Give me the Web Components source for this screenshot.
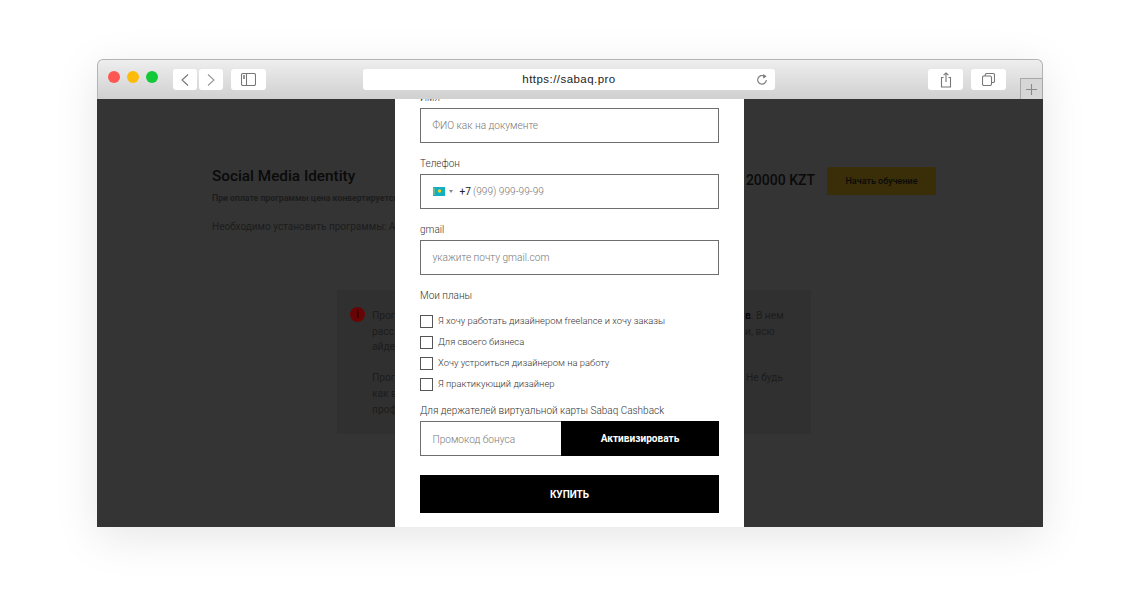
<!DOCTYPE html>
<html lang="ru">
<head>
<meta charset="utf-8">
<title>Sabaq</title>
<style>
    html, body { margin: 0; background: #fff; }
    body { font-family: Roboto, "Liberation Sans", sans-serif; height: 595px; overflow: hidden; }
    safari-window { margin: 59px 0 0 97px; }
</style>
</head>
<body>

<safari-window url="https://sabaq.pro">
    <course-page></course-page>
    <buy-modal slot="overlay">
        <form-field label="Имя" placeholder="ФИО как на документе"></form-field>
        <form-field label="Телефон" phone placeholder="(999) 999-99-99"></form-field>
        <form-field label="gmail" placeholder="укажите почту gmail.com"></form-field>
        <plan-list label="Мои планы">
            <plan-check>Я хочу работать дизайнером freelance и хочу заказы</plan-check>
            <plan-check>Для своего бизнеса</plan-check>
            <plan-check>Хочу устроиться дизайнером на работу</plan-check>
            <plan-check>Я практикующий дизайнер</plan-check>
        </plan-list>
        <promo-field label="Для держателей виртуальной карты Sabaq Cashback"></promo-field>
    </buy-modal>
</safari-window>

<script>
// browser chrome round the page
class SafariWindow extends HTMLElement {
    constructor() {
        super();
        this.attachShadow({mode: 'open'}).innerHTML = `
        <style>
            :host { display: block; width: 946px; height: 468px; box-shadow: 0 10px 45px rgba(0,0,0,.1); border-radius: 6px 6px 0 0; }
            .bar {
                box-sizing: border-box; height: 40px; position: relative;
                display: flex; align-items: flex-start; padding: 9px 0 0 9.500px;
                background: linear-gradient(#eeeeee, #d0d0d0);
                border: 1px solid #b4b4b4; border-bottom: 0; border-radius: 6px 6px 0 0;
            }
            .lights { display: flex; gap: 7px; margin: 2px 15.500px 0 0; }
            .lights i { width: 12px; height: 12px; border-radius: 50%; }
            .btn {
                height: 21px; background: #fff; border-radius: 3px; display: flex;
                align-items: center; justify-content: center; flex: none;
            }
            svg { fill: none; stroke: #777; stroke-width: 1.1; display: block; }
            .url {
                width: 412px; margin: 0 153px 0 97px; font: 11.500px/23px "Liberation Sans", sans-serif;
                letter-spacing: .45px; color: #222; position: relative;
            }
            .url svg { position: absolute; right: 7px; top: 4px; }
            .plus {
                position: absolute; right: -1px; bottom: 0; width: 21px; height: 20px;
                border: 1px solid #a8a8a8; border-bottom: 0; background: #d6d6d6;
                display: flex; align-items: center; justify-content: center;
            }
            .stage { position: relative; height: 428px; overflow: hidden; background: #343434; }
        </style>
        <div class="bar">
            <div class="lights">
                <i style="background:#fc5753"></i><i style="background:#fdbc0c"></i><i style="background:#12c93a"></i>
            </div>
            <div class="btn" style="width:24px"><svg width="10" height="14" viewBox="0 0 10 14"><path d="M8 1.500 2 7l6 5.500"/></svg></div>
            <div class="btn" style="width:24px;margin:0 8px 0 2px"><svg width="10" height="14" viewBox="0 0 10 14"><path stroke="#999" d="M2 1.500 8 7l-6 5.500"/></svg></div>
            <div class="btn" style="width:35px"><svg width="15" height="13" viewBox="0 0 15 13"><rect x=".5" y=".5" width="14" height="12" rx="1.500"/><path d="M5.500.5v12"/><path stroke-width="1.400" d="M2 3h2M2 5h2"/></svg></div>
            <div class="btn url"><span id="url"></span><svg width="12" height="13" viewBox="0 0 12 13"><path d="M8.600 3.400A4.300 4.300 0 1 0 10.300 7"/><path fill="#777" stroke="none" d="M7.200 1 10.600 3.400 7.200 5.400z"/></svg></div>
            <div class="btn" style="width:35px"><svg width="12" height="16" viewBox="0 0 12 16"><path d="M3.600 5.500H1.500v9.500h9V5.500H8.400M6 10V1M3.600 3.200 6 .9l2.400 2.300"/></svg></div>
            <div class="btn" style="width:35px;margin-left:8px"><svg width="13" height="13" viewBox="0 0 13 13"><rect x=".5" y="3" width="9" height="9.500" rx="1.500"/><path d="M3.200 3V2A1.500 1.500 0 0 1 4.700.5h6.300A1.500 1.500 0 0 1 12.500 2v6A1.500 1.500 0 0 1 11 9.500H9.500"/></svg></div>
            <div class="plus"><svg width="11" height="11" viewBox="0 0 11 11"><path stroke="#8a8a8a" d="M5.500 0v11M0 5.500h11"/></svg></div>
        </div>
        <div class="stage"><slot></slot><slot name="overlay"></slot></div>`;
    }

    connectedCallback() {
        this.shadowRoot.getElementById('url').textContent = this.getAttribute('url');
    }
}

// the dimmed page that sits behind the modal
class CoursePage extends HTMLElement {
    constructor() {
        super();
        this.attachShadow({mode: 'open'}).innerHTML = `
        <style>
            :host { display: block; padding: 68px 107px 0 115px; color: #0a0a0a; white-space: nowrap; }
            .head { display: flex; align-items: flex-start; height: 28px; }
            h1 { font: 500 15.300px/18px Roboto, sans-serif; margin: 0; }
            .price { margin-left: auto; font: 500 14px/26px Roboto, sans-serif; }
            .start {
                width: 109px; height: 28px; margin-left: 12px; background: #392e08; border-radius: 1px;
                font: 500 9px/28px Roboto, sans-serif; text-align: center;
            }
            .note { font: 700 8.700px/12px Roboto, sans-serif; color: #1d1d1d; margin-top: -3px; }
            .need { font: 400 10px/14px Roboto, sans-serif; color: #1c1c1c; margin-top: 16px; }
            .info {
                box-sizing: border-box; width: 474px; height: 144px; margin: 56px 0 0 125px;
                background: #303030; padding: 17px 0 0 13px; display: flex; gap: 7px;
                font: 400 10.200px/15.600px Roboto, sans-serif; color: #1c1c1c;
            }
            .dot {
                width: 15px; height: 15px; border-radius: 50%; background: #690404; flex: none;
                color: #2b0000; font: 700 10px/15px Roboto, sans-serif; text-align: center;
            }
            .lines { display: grid; grid-template-columns: 373px auto; align-content: start; grid-auto-rows: 15.600px; margin-top: 1px; }
            .gap { grid-column: 1 / 3; height: 15.600px; }
            .shift { margin-left: 1px; }
            b { color: #050505; }
        </style>
        <div class="head"><h1>Social Media Identity</h1><div class="price">20000 KZT</div><div class="start">Начать обучение</div></div>
        <div class="note">При оплате программы цена конвертируется</div>
        <div class="need">Необходимо установить программы: Adobe</div>
        <div class="info">
            <div class="dot">i</div>
            <div class="lines">
                <span>Прог</span><span><b>в</b>. В нем</span>
                <span>расс</span><span>и, всю</span>
                <span>айде</span><span></span>
                <div class="gap"></div>
                <span>Прог</span><span class="shift">Не будь</span>
                <span>как в</span><span></span>
                <span>проф</span><span></span>
            </div>
        </div>`;
    }
}

class BuyModal extends HTMLElement {
    constructor() {
        super();
        this.attachShadow({mode: 'open'}).innerHTML = `
        <style>
            :host { position: absolute; left: 298px; top: 0; bottom: 0; width: 349px; background: #fff; overflow: hidden; }
            .body { box-sizing: border-box; padding: 0 25px 0 25px; margin-top: -10px; display: flex; flex-direction: column; gap: 12px; }
            button {
                display: block; height: 38px; border: 0; padding: 2px 0 0; background: #000; color: #fff; margin-top: 7px;
                font: 700 10px/36px Roboto, sans-serif;
            }
        </style>
        <div class="body"><slot></slot><button>КУПИТЬ</button></div>`;
    }
}

class FormField extends HTMLElement {
    constructor() {
        super();
        this.attachShadow({mode: 'open'}).innerHTML = `
        <style>
            :host { display: block; }
            label { display: block; height: 16px; font: 300 10px/18px Roboto, sans-serif; color: #333; margin-bottom: 3px; }
            .box {
                box-sizing: border-box; height: 35px; border: 1px solid #6e6e6e; padding: 1px 11.500px 0;
                display: flex; align-items: center; font: 300 10.150px/14px Roboto, sans-serif; color: #777;
            }
            :host([phone]) .box { padding-top: 0; }
            .pre { display: none; align-items: center; }
            :host([phone]) .pre { display: flex; }
            .caret { width: 0; height: 0; margin: 0 7px 0 4px; border: 2px solid transparent; border-top: 3px solid #888; border-bottom: 0; }
            .code { color: #222; font-weight: 400; margin-right: 2px; }
            svg { display: block; }
        </style>
        <label></label>
        <div class="box">
            <div class="pre">
                <svg width="12" height="9" viewBox="0 0 12 9"><rect width="12" height="9" fill="#12aec4"/><circle cx="6.500" cy="4" r="1.700" fill="#f2d21f"/><path d="M1 1v7" stroke="#d8d24a" stroke-width=".8"/></svg>
                <i class="caret"></i><span class="code">+7</span>
            </div>
            <span class="ph"></span>
        </div>`;
    }

    connectedCallback() {
        this.shadowRoot.querySelector('label').textContent = this.getAttribute('label');
        this.shadowRoot.querySelector('.ph').textContent = this.getAttribute('placeholder');
    }
}

class PlanList extends HTMLElement {
    constructor() {
        super();
        this.attachShadow({mode: 'open'}).innerHTML = `
        <style>
            :host { display: block; }
            label { display: block; height: 16px; font: 300 10px/18px Roboto, sans-serif; color: #333; margin-bottom: 12px; }
            .rows { display: flex; flex-direction: column; gap: 8px; }
        </style>
        <label></label>
        <div class="rows"><slot></slot></div>`;
    }

    connectedCallback() {
        this.shadowRoot.querySelector('label').textContent = this.getAttribute('label');
    }
}

class PlanCheck extends HTMLElement {
    constructor() {
        super();
        this.attachShadow({mode: 'open'}).innerHTML = `
        <style>
            :host { display: flex; align-items: center; gap: 5px; height: 13px; font: 300 9.400px/13px Roboto, sans-serif; color: #333; }
            i { box-sizing: border-box; width: 13px; height: 13px; border: 1.500px solid #555; flex: none; }
            span { margin-top: -2px; }
        </style>
        <i></i><span><slot></slot></span>`;
    }
}

class PromoField extends HTMLElement {
    constructor() {
        super();
        this.attachShadow({mode: 'open'}).innerHTML = `
        <style>
            :host { display: block; margin-top: -1px; }
            label { display: block; height: 16px; font: 300 10px/18px Roboto, sans-serif; color: #333; margin-bottom: 3px; }
            .row { display: flex; height: 35px; }
            .ph {
                box-sizing: border-box; width: 141px; border: 1px solid #6e6e6e; border-right: 0; padding-left: 11.500px;
                font: 300 10.150px/35px Roboto, sans-serif; color: #777;
            }
            .go { flex: 1; background: #000; color: #fff; text-align: center; font: 700 10.100px/36px Roboto, sans-serif; }
        </style>
        <label></label>
        <div class="row"><div class="ph">Промокод бонуса</div><div class="go">Активизировать</div></div>`;
    }

    connectedCallback() {
        this.shadowRoot.querySelector('label').textContent = this.getAttribute('label');
    }
}

customElements.define('safari-window', SafariWindow);
customElements.define('course-page', CoursePage);
customElements.define('buy-modal', BuyModal);
customElements.define('form-field', FormField);
customElements.define('plan-list', PlanList);
customElements.define('plan-check', PlanCheck);
customElements.define('promo-field', PromoField);
</script>
</body>
</html>
